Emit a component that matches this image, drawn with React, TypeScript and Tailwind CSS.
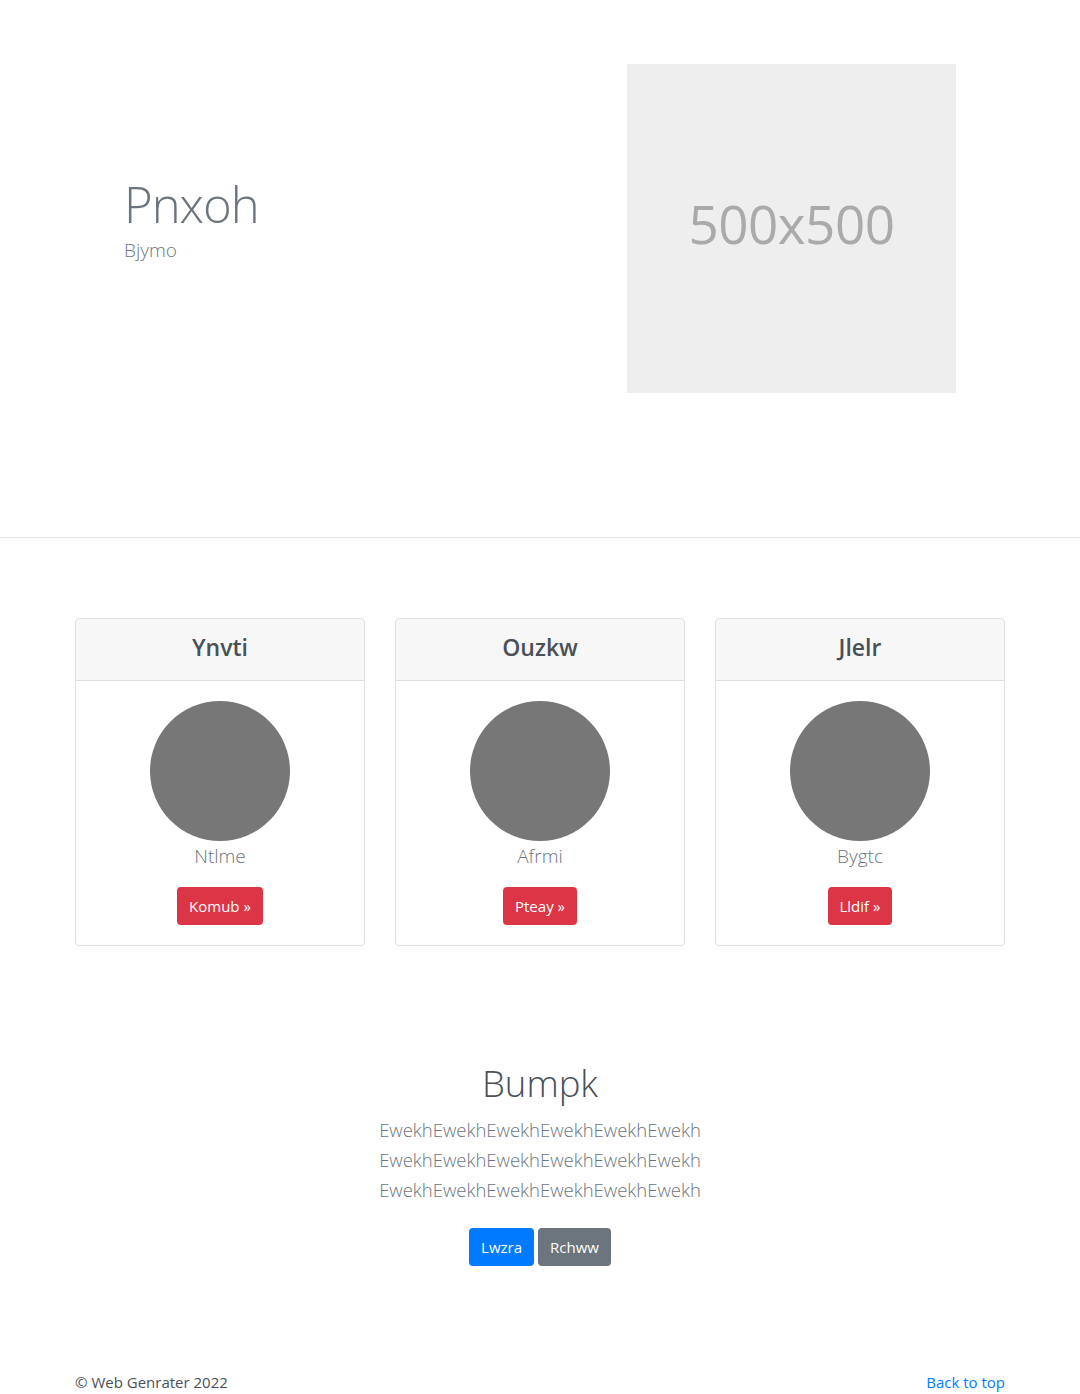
import React from 'react';

const font = { fontFamily: '"Open Sans", "Noto Sans", sans-serif' };

interface PersonCardProps {
  title: string;
  name: string;
  action: string;
}

const PersonCard: React.FC<PersonCardProps> = ({ title, name, action }) => {
  return (
    <div className="flex flex-col rounded border border-[#dfdfdf] bg-white">
      {/* Header */}
      <div className="h-[62px] flex items-center justify-center bg-[#f7f7f7] border-b border-[#dfdfdf] rounded-t pb-[5px]">
        <h4 className="text-[23px] font-semibold text-[#495057] leading-none">{title}</h4>
      </div>

      {/* Body */}
      <div className="flex flex-col items-center p-5">
        <div className="w-[140px] h-[140px] rounded-full bg-[#777777]" />
        <p className="text-[19px] font-light text-[#6c757d] leading-[30px] mb-4">{name}</p>
        <button className="h-[38px] px-3 rounded bg-[#dc3545] text-white text-[15px] leading-none">
          {action} &raquo;
        </button>
      </div>
    </div>
  );
};

const cards: PersonCardProps[] = [
  { title: 'Ynvti', name: 'Ntlme', action: 'Komub' },
  { title: 'Ouzkw', name: 'Afrmi', action: 'Pteay' },
  { title: 'Jlelr', name: 'Bygtc', action: 'Lldif' },
];

export default function App() {
  return (
    <div className="min-h-[1394px] bg-white text-[#212529]" style={font}>
      {/* Hero */}
      <section className="pt-[64px] pb-[144px]">
        <div className="w-[930px] mx-auto flex items-center">
          <div className="w-[465px] pl-[49px] pb-[18px]">
            <h1 className="text-[49px] font-light text-[#6c757d] leading-[56px] tracking-[-1px]">Pnxoh</h1>
            <p className="text-[19px] font-light text-[#6c757d] leading-[26px] mt-[5px]">Bjymo</p>
          </div>
          <div className="flex-1 flex pl-[87px]">
            <div className="w-[329px] h-[329px] bg-[#eeeeee] flex items-center justify-center pb-[10px]">
              <span className="text-[53px] text-[#aaaaaa] leading-none tracking-[-0.5px]">500x500</span>
            </div>
          </div>
        </div>
      </section>

      <hr className="border-0 border-t border-[#e5e5e5]" />

      {/* Cards */}
      <section className="pt-[80px]">
        <div className="w-[930px] mx-auto grid grid-cols-3 gap-[30px]">
          {cards.map((c) => (
            <PersonCard key={c.title} {...c} />
          ))}
        </div>
      </section>

      {/* Call to action */}
      <section className="pt-[113px] flex flex-col items-center text-center">
        <h1 className="text-[36.5px] font-light text-[#495057] leading-[48px] mb-2">Bumpk</h1>
        <p className="text-[18.5px] font-light text-[#6c757d] leading-[30px]">
          EwekhEwekhEwekhEwekhEwekhEwekh
          <br />
          EwekhEwekhEwekhEwekhEwekhEwekh
          <br />
          EwekhEwekhEwekhEwekhEwekhEwekh
        </p>
        <div className="flex gap-1 mt-[23px]">
          <button className="h-[38px] px-3 rounded bg-[#007bff] text-white text-[15px] leading-none">Lwzra</button>
          <button className="h-[38px] px-3 rounded bg-[#6c757d] text-white text-[15px] leading-none">Rchww</button>
        </div>
      </section>

      {/* Footer */}
      <footer className="pt-[104px]">
        <div className="w-[930px] mx-auto flex justify-between text-[15px] leading-6">
          <p className="text-[#495057]">&copy; Web Genrater 2022</p>
          <a href="#" className="text-[#007bff]">Back to top</a>
        </div>
      </footer>
    </div>
  );
}
